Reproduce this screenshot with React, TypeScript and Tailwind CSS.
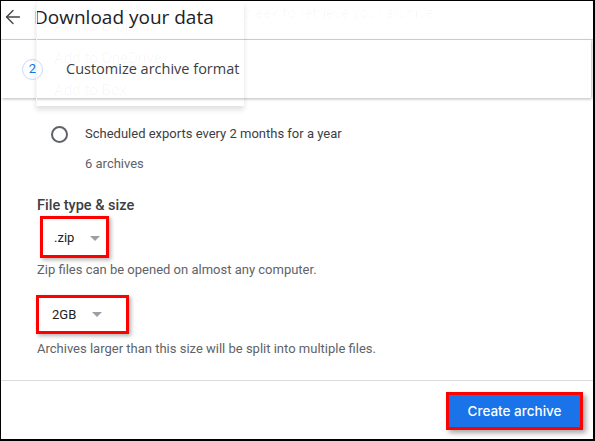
import { ArrowLeft } from 'lucide-react'

const menuItems = ['Add to Dropbox', 'Add to OneDrive', 'Add to Box']

function Caret() {
    return <span className="ml-[16px] inline-block w-0 h-0 border-l-[5px] border-r-[5px] border-t-[5px] border-l-transparent border-r-transparent border-t-[#9aa0a6]" />
}

export default function App() {
    return (
        <div className="relative w-[595px] h-[441px] overflow-hidden bg-white border-l border-t border-r-2 border-b-2 border-black font-['Roboto',sans-serif]">
            {/* faded destination menu left over behind the header */}
            <div className="absolute left-[35px] top-0 w-[208px] h-[105px] z-20 pointer-events-none border-l border-[#f5f5f5] shadow-[0_4px_5px_rgba(0,0,0,0.12)]">
                <div className="flex flex-col pl-[17px] pt-[14px] gap-[10px] text-[15px] text-[#000]/[0.035]">
                    {menuItems.map(m => <div key={m} className="h-[22px] leading-[22px]">{m}</div>)}
                </div>
            </div>
            <div className="absolute left-[243px] top-[1px] z-20 pointer-events-none text-[15px] text-[#000]/[0.03]">week to retrieve your archive.</div>

            <div className="flex flex-col h-full">
                <div className="relative z-10 h-[39px] flex items-start pt-[4px] bg-white border-b border-[#d4d6d8] shadow-[0_1px_2px_rgba(0,0,0,0.1)]">
                    <ArrowLeft size={22} strokeWidth={1.5} className="ml-[1px] mt-[1px] text-[#444]" />
                    <h1 className="ml-[10px] text-[19px] leading-[24px] text-[#202124] font-['Open_Sans',sans-serif]">Download your data</h1>
                </div>

                <div className="relative z-10 h-[58px] mr-[2px] flex items-center bg-white shadow-[1px_1px_3px_rgba(0,0,0,0.28)]">
                    <div className="ml-[21px] w-[21px] h-[21px] rounded-full border border-[#c6dafc] flex items-center justify-center text-[13px] text-[#1a73e8]">2</div>
                    <span className="ml-[23px] text-[14.5px] text-[#3c4043] font-['Open_Sans',sans-serif]">Customize archive format</span>
                </div>

                <div className="flex flex-col pl-[36px] text-[#3c4043]">
                    <div className="mt-[24px] h-[24px] flex items-center">
                        <span className="ml-[14px] w-[17px] h-[17px] rounded-full border-2 border-[#5f6368]" />
                        <span className="ml-[17px] text-[13px]">Scheduled exports every 2 months for a year</span>
                    </div>
                    <div className="mt-[8px] h-[20px] flex items-center pl-[48px] text-[13px] text-[#5f6368]">6 archives</div>

                    <div className="mt-[22px] h-[20px] flex items-center text-[14.5px] font-medium text-[#3c4043]">File type &amp; size</div>

                    <div className="ml-[3px] w-[69px] h-[42px] flex items-center pl-[11px] pt-[2px] border-[3px] border-[#ff0000] shadow-[2px_2px_4px_rgba(0,0,0,0.3)] text-[13px] text-[#202124]">
                        .zip<Caret />
                    </div>
                    <div className="mt-[3px] h-[18px] flex items-center text-[13px] text-[#5f6368]">Zip files can be opened on almost any computer.</div>

                    <div className="mt-[16px] -ml-[1px] w-[93px] h-[39px] flex items-center pl-[13px] border-[3px] border-[#ff0000] shadow-[2px_2px_4px_rgba(0,0,0,0.3)] text-[13px] text-[#202124]">
                        2GB<Caret />
                    </div>
                    <div className="mt-[6px] h-[18px] flex items-center text-[13px] text-[#5f6368]">Archives larger than this size will be split into multiple files.</div>
                </div>

                <div className="mt-[22px] border-t border-[#dadce0]" />

                <div className="flex justify-end pt-[11px] pr-[10px]">
                    <div className="w-[137px] h-[38px] border-[3px] border-[#ff0000] shadow-[3px_3px_5px_rgba(0,0,0,0.35)]">
                        <button className="w-full h-full bg-[#1a73e8] text-white text-[13.5px] font-medium font-['Inter',sans-serif]">Create archive</button>
                    </div>
                </div>
            </div>
        </div>
    )
}
